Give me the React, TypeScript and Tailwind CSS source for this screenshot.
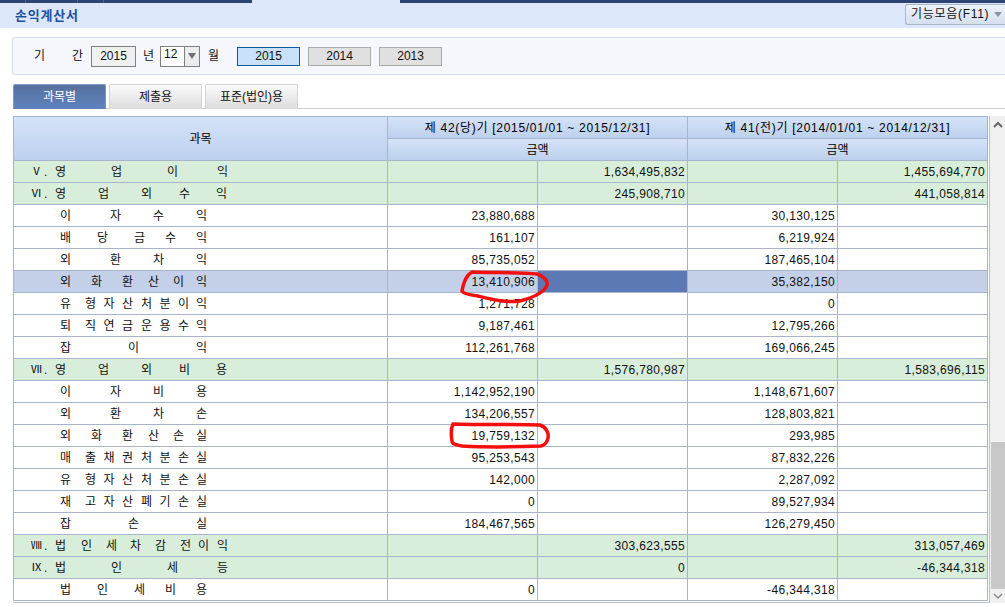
const font = { fontFamily: '"Liberation Sans","Noto Sans CJK KR",sans-serif' };

type Row = { kind: "top" | "sub"; roman?: string; label: string; vals: [string, string, string, string]; hi?: boolean };

const rows: Row[] = [
  { kind: "top", roman: "Ⅴ", label: "영업이익", vals: ["", "1,634,495,832", "", "1,455,694,770"] },
  { kind: "top", roman: "Ⅵ", label: "영업외수익", vals: ["", "245,908,710", "", "441,058,814"] },
  { kind: "sub", label: "이자수익", vals: ["23,880,688", "", "30,130,125", ""] },
  { kind: "sub", label: "배당금수익", vals: ["161,107", "", "6,219,924", ""] },
  { kind: "sub", label: "외환차익", vals: ["85,735,052", "", "187,465,104", ""] },
  { kind: "sub", label: "외화환산이익", vals: ["13,410,906", "", "35,382,150", ""], hi: true },
  { kind: "sub", label: "유형자산처분이익", vals: ["1,271,728", "", "0", ""] },
  { kind: "sub", label: "퇴직연금운용수익", vals: ["9,187,461", "", "12,795,266", ""] },
  { kind: "sub", label: "잡이익", vals: ["112,261,768", "", "169,066,245", ""] },
  { kind: "top", roman: "Ⅶ", label: "영업외비용", vals: ["", "1,576,780,987", "", "1,583,696,115"] },
  { kind: "sub", label: "이자비용", vals: ["1,142,952,190", "", "1,148,671,607", ""] },
  { kind: "sub", label: "외환차손", vals: ["134,206,557", "", "128,803,821", ""] },
  { kind: "sub", label: "외화환산손실", vals: ["19,759,132", "", "293,985", ""] },
  { kind: "sub", label: "매출채권처분손실", vals: ["95,253,543", "", "87,832,226", ""] },
  { kind: "sub", label: "유형자산처분손실", vals: ["142,000", "", "2,287,092", ""] },
  { kind: "sub", label: "재고자산폐기손실", vals: ["0", "", "89,527,934", ""] },
  { kind: "sub", label: "잡손실", vals: ["184,467,565", "", "126,279,450", ""] },
  { kind: "top", roman: "Ⅷ", label: "법인세차감전이익", vals: ["", "303,623,555", "", "313,057,469"] },
  { kind: "top", roman: "Ⅸ", label: "법인세등", vals: ["", "0", "", "-46,344,318"] },
  { kind: "sub", label: "법인세비용", vals: ["0", "", "-46,344,318", ""] },
];

const subAdvance: Record<number, number[]> = {
  3: [68, 68, 12],
  4: [50, 43, 43, 12],
  5: [37, 37, 31, 31, 12],
  6: [31, 31, 26, 25, 23, 12],
  8: [25, 18.5, 18.5, 19, 18.5, 18.5, 18, 12],
};
const topAdvance: Record<number, number[]> = {
  4: [56, 56, 50, 12],
  5: [43, 43, 38, 37, 12],
  8: [26, 25, 24, 25, 25, 18, 19, 12],
};

function Spaced({ text, advance }: { text: string; advance: Record<number, number[]> }) {
  const chars = Array.from(text);
  const widths = advance[chars.length];
  return (
    <span className="flex">
      {chars.map((c, i) => (
        <span key={i} className="shrink-0" style={{ width: widths[i] }}>
          {c}
        </span>
      ))}
    </span>
  );
}

function HeadCell({ children, className = "" }: { children: React.ReactNode; className?: string }) {
  return (
    <div
      className={`flex items-center justify-center border-r border-b border-[#a9b3c9] bg-gradient-to-b from-[#d5e3f8] to-[#bcd0ee] text-[12px] text-black ${className}`}
    >
      {children}
    </div>
  );
}

function DataRow({ r }: { r: Row }) {
  const bg = r.hi ? "bg-[#c3d0e8]" : r.kind === "top" ? "bg-[#d8eedb]" : "bg-white";
  return (
    <>
      <div className={`flex h-[22px] items-center border-r border-b border-[#a9b3c9] text-[12px] text-[#111] ${bg}`}>
        {r.kind === "top" ? (
          <>
            <span className="ml-[15px] w-[15px] shrink-0 text-center text-[11px]">{r.roman}</span>
            <span className="w-[11px] shrink-0">.</span>
            <Spaced text={r.label} advance={topAdvance} />
          </>
        ) : (
          <span className="ml-[46px]">
            <Spaced text={r.label} advance={subAdvance} />
          </span>
        )}
      </div>
      {r.vals.map((v, i) => (
        <div
          key={i}
          className={`flex h-[22px] items-center justify-end border-r border-b border-[#a9b3c9] pr-[2px] text-[12px] tracking-[0.35px] text-[#111] ${
            r.hi && i === 1 ? "bg-[#5d79b5]" : bg
          }`}
        >
          {v}
        </div>
      ))}
    </>
  );
}

function YearBtn({ label, active }: { label: string; active?: boolean }) {
  return (
    <div
      className={`flex h-[19px] w-[63px] items-center justify-center border text-[12px] text-[#111] ${
        active ? "border-[#0f5a9c] bg-[#c9e1f8]" : "border-[#aaaaaa] bg-[#e0e0e0]"
      }`}
    >
      {label}
    </div>
  );
}

function Tab({ label, active }: { label: string; active?: boolean }) {
  return (
    <div
      className={`flex h-[25px] w-[93px] items-center justify-center rounded-t-[2px] border-x border-t text-[12px] ${
        active
          ? "border-[#7f97c4] bg-gradient-to-b from-[#56719f] to-[#5f83bd] text-white"
          : "border-[#d4d4d4] bg-gradient-to-b from-[#fbfbfb] to-[#dcdcdc] text-[#111]"
      }`}
    >
      {label}
    </div>
  );
}

export default function App() {
  return (
    <div className="relative h-[607px] w-[1005px] overflow-hidden bg-white" style={font}>
      {/* top strip */}
      <div className="flex h-[3px]">
        <div className="w-[26px] border-r border-[#4a6190] bg-[#2c4374]" />
        <div className="w-[52px] border-r border-[#4a6190] bg-[#2c4374]" />
        <div className="w-[26px] border-r border-[#4a6190] bg-[#2c4374]" />
        <div className="w-[148px] bg-[#2c4374]" />
        <div className="w-[148px] bg-[#dce8fa]" />
        <div className="flex-1 bg-[#2c4374]" />
      </div>

      {/* title band */}
      <div className="flex h-[25px] items-center justify-between bg-[#dce8fa]">
        <span className="ml-[15px] text-[13px] font-bold tracking-[0.8px] text-[#1f4f9f]">손익계산서</span>
        <div className="mb-[3px] flex h-[21px] w-[100px] items-center gap-[5px] rounded-l-[3px] border border-r-0 border-[#a9b6cc] bg-gradient-to-b from-[#eef3fb] to-[#d5dfee] pl-[5px] text-[12px] tracking-[0.7px] text-[#111]">
          <span className="whitespace-nowrap">기능모음(F11)</span>
          <span className="h-0 w-0 shrink-0 border-x-[4px] border-t-[5px] border-x-transparent border-t-[#8a94a6]" />
        </div>
      </div>

      {/* filter panel */}
      <div className="ml-[12px] mt-[9px] flex h-[38px] items-center rounded-l-[3px] border border-r-0 border-[#d5deef] bg-[#f5f7fc] text-[12px] text-[#111]">
        <span className="ml-[21px] w-[38px]">기</span>
        <span className="w-[19px]">간</span>
        <div className="flex h-[21px] w-[45px] items-center justify-center border border-[#808080] bg-[#f0f0f0]">2015</div>
        <span className="ml-[7px]">년</span>
        <div className="ml-[6px] flex h-[21px] w-[40px] border border-[#808080] bg-white">
          <span className="w-[23px] pl-[3px] leading-[15px]">12</span>
          <span className="flex flex-1 items-center justify-center border-l border-[#808080] bg-[#ececec]">
            <span className="h-0 w-0 border-x-[4px] border-t-[6px] border-x-transparent border-t-[#707070]" />
          </span>
        </div>
        <span className="ml-[8px]">월</span>
        <div className="ml-[18px] flex gap-[8px]">
          <YearBtn label="2015" active />
          <YearBtn label="2014" />
          <YearBtn label="2013" />
        </div>
      </div>

      {/* tabs */}
      <div className="ml-[13px] mt-[9px] flex h-[25px] gap-[3px] border-b border-[#cccccc]">
        <Tab label="과목별" active />
        <Tab label="제출용" />
        <Tab label="표준(법인)용" />
      </div>

      {/* grid + scrollbar */}
      <div className="ml-[13px] mt-[7px] flex">
        <div className="w-[977px] border-r border-b border-[#b9c0cf] pr-[1px] pb-[1px]">
          <div className="grid grid-cols-[374px_150px_150px_150px_150px] border-l border-t border-[#a9b3c9]">
            <HeadCell className="row-span-2">과목</HeadCell>
            <HeadCell className="col-span-2 h-[22px] whitespace-pre tracking-[0.7px]">제 42(당)기 [2015/01/01 ~ 2015/12/31]</HeadCell>
            <HeadCell className="col-span-2 h-[22px] whitespace-pre tracking-[0.7px]">제 41(전)기 [2014/01/01 ~ 2014/12/31]</HeadCell>
            <HeadCell className="col-span-2 h-[22px]">금액</HeadCell>
            <HeadCell className="col-span-2 h-[22px]">금액</HeadCell>
            {rows.map((r) => (
              <DataRow key={r.label} r={r} />
            ))}
          </div>
        </div>
        <div className="flex h-[487px] w-[15px] flex-col bg-[#f0f0f0]">
          <svg width="15" height="17" viewBox="0 0 15 17" className="shrink-0">
            <path d="M4 11l4-4 4 4" fill="none" stroke="#666666" strokeWidth="2" />
          </svg>
          <div className="ml-[1px] mt-[309px] flex-1 bg-[#c8c8c8]" />
          <svg width="15" height="14" viewBox="0 0 15 14" className="shrink-0">
            <path d="M4 5l4 4 4-4" fill="none" stroke="#8a8a8a" strokeWidth="1.500" />
          </svg>
        </div>
      </div>

      {/* hand-drawn red marks over the figures */}
      <svg className="pointer-events-none absolute left-0 top-0" width="1005" height="607" viewBox="0 0 1005 607" fill="none">
        <path
          d="M472 272C490 273 520 272 537 274C544 276 548 281 547 285C545 291 535 297 520 301C505 303 490 299 478 296C470 295 463 293 462 291C463 285 465 276 472 272Z"
          stroke="#f40f0f"
          strokeWidth="3.500"
        />
        <path
          d="M453 424C480 425 520 424 540 425C546 427 549 433 548 438C547 443 545 445 541 446C515 447 480 447 462 446C456 445 452 444 452 441C451 435 451 428 453 424Z"
          stroke="#f40f0f"
          strokeWidth="3.500"
        />
      </svg>
    </div>
  );
}
